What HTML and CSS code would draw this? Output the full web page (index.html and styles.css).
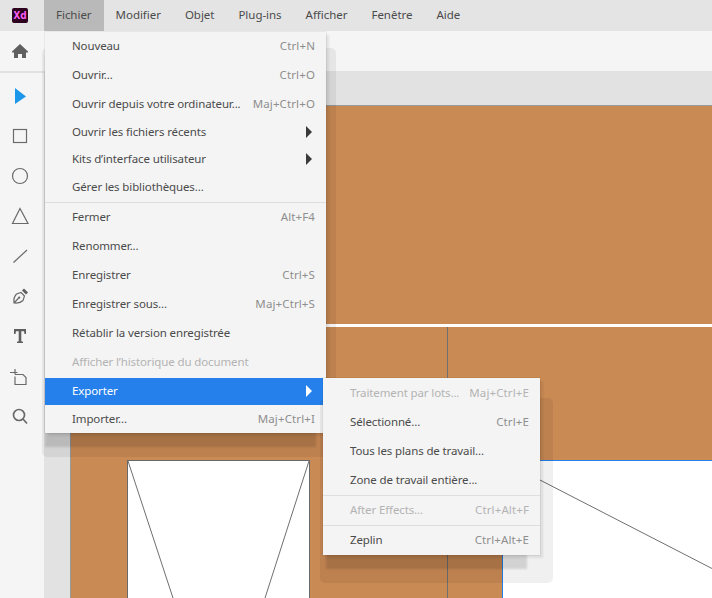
FILE: index.html
```html
<!DOCTYPE html>
<html lang="fr">
<head>
    <meta charset="UTF-8">
    <title>Adobe XD</title>
    <link rel="stylesheet" href="styles.css">
</head>
<body>
<div class="app">
    <div class="titlebar">
        <div class="logo-cell"><span class="logo">Xd</span></div>
        <div class="mainmenu active">Fichier</div>
        <div class="mainmenu">Modifier</div>
        <div class="mainmenu">Objet</div>
        <div class="mainmenu">Plug-ins</div>
        <div class="mainmenu">Afficher</div>
        <div class="mainmenu">Fenêtre</div>
        <div class="mainmenu">Aide</div>
    </div>
    <div class="topbar">
        <div class="tool">
            <svg width="24" height="24" viewBox="0 0 24 24"><path class="fill" d="M12 5 L20 12.5 V13.5 H18 V19 H14 V15 H10 V19 H6 V13.5 H4 V12.5 Z"/></svg>
        </div>
    </div>
    <div class="main">
        <div class="toolbar">
            <div class="tool"><svg width="24" height="24" viewBox="0 0 24 24"><path class="blue" d="M7 4 L18 12.5 L7 20 Z"/></svg></div>
            <div class="tool"><svg width="24" height="24" viewBox="0 0 24 24"><rect class="line" x="5.5" y="5.5" width="13" height="13"/></svg></div>
            <div class="tool"><svg width="24" height="24" viewBox="0 0 24 24"><circle class="line" cx="12" cy="12" r="7.5"/></svg></div>
            <div class="tool"><svg width="24" height="24" viewBox="0 0 24 24"><path class="line" d="M12 4.5 L4.5 19.5 H20 Z"/></svg></div>
            <div class="tool"><svg width="24" height="24" viewBox="0 0 24 24"><path class="line" d="M5.5 18.5 L19 6"/></svg></div>
            <div class="tool"><svg width="24" height="24" viewBox="0 0 24 24"><path class="line" d="M6 19 C5.5 15 6.5 12 8.5 10 L13 8.5 L16.5 12 L15 16.5 C13 18.5 9.5 19.5 6 19 Z M6 19 L10.7 14"/><circle class="fill" cx="11.2" cy="13.6" r="1.1"/><path class="fill" d="M14 6.5 L16 4.5 L20 8.5 L18 10.5 Z"/></svg></div>
            <div class="tool"><svg width="24" height="24" viewBox="0 0 24 24"><path class="fill" d="M6 5 H18 V10 H16.5 L16 7.3 H13.3 V17.3 L15 17.7 V19 H9 V17.7 L10.7 17.3 V7.3 H8 L7.5 10 H6 Z"/></svg></div>
            <div class="tool"><svg width="24" height="24" viewBox="0 0 24 24"><path class="line" d="M7 10.5 H15 L18 13.5 V20.5 H7 V12.5 M2 8.5 H9.5 M7 5 V10.5"/></svg></div>
            <div class="tool"><svg width="24" height="24" viewBox="0 0 24 24"><circle class="line thick" cx="11" cy="11" r="5.5"/><path class="line thick" d="M15 15 L19 19.5"/></svg></div>
        </div>
        <div class="workspace">
            <div class="band"></div>
            <div class="stage">
                <svg class="artboards" width="642" height="493" viewBox="70 105 642 493">
                    <rect x="71" y="324" width="641" height="3" fill="#fff"/>
                    <path class="board-line" d="M447.5 327 V598"/>
                    <rect class="board" x="127.5" y="460.5" width="182" height="140"/>
                    <path class="board-line" d="M128 461 L173 598 M309 461 L265 598"/>
                    <rect class="board-sel" x="502.5" y="460.5" width="212" height="140"/>
                    <path class="board-line" d="M503 461 L712 568.5"/>
                </svg>
            </div>
        </div>
    </div>

    <div class="menu menu-file">
        <div class="menu-body">
            <div class="row"><span>Nouveau</span><span class="key">Ctrl+N</span></div>
            <div class="row"><span>Ouvrir...</span><span class="key">Ctrl+O</span></div>
            <div class="row"><span>Ouvrir depuis votre ordinateur...</span><span class="key">Maj+Ctrl+O</span></div>
            <div class="row short"><span>Ouvrir les fichiers récents</span><i class="arrow"></i></div>
            <div class="row short"><span>Kits d’interface utilisateur</span><i class="arrow"></i></div>
            <div class="row"><span>Gérer les bibliothèques...</span></div>
            <div class="sep"></div>
            <div class="row"><span>Fermer</span><span class="key">Alt+F4</span></div>
            <div class="row"><span>Renommer...</span></div>
            <div class="row"><span>Enregistrer</span><span class="key">Ctrl+S</span></div>
            <div class="row"><span>Enregistrer sous...</span><span class="key">Maj+Ctrl+S</span></div>
            <div class="row"><span>Rétablir la version enregistrée</span></div>
            <div class="row off"><span>Afficher l’historique du document</span></div>
            <div class="row short current"><span>Exporter</span><i class="arrow"></i></div>
            <div class="row last"><span>Importer...</span><span class="key">Maj+Ctrl+I</span></div>
        </div>
    </div>

    <div class="menu menu-export">
        <div class="menu-body">
            <div class="row off"><span>Traitement par lots...</span><span class="key">Maj+Ctrl+E</span></div>
            <div class="row"><span>Sélectionné...</span><span class="key">Ctrl+E</span></div>
            <div class="row"><span>Tous les plans de travail...</span></div>
            <div class="row"><span>Zone de travail entière...</span></div>
            <div class="sep"></div>
            <div class="row off"><span>After Effects...</span><span class="key">Ctrl+Alt+F</span></div>
            <div class="sep"></div>
            <div class="row"><span>Zeplin</span><span class="key">Ctrl+Alt+E</span></div>
        </div>
    </div>
</div>
</body>
</html>
```

FILE: styles.css
```css
*{
 box-sizing: border-box;
}
html, body{
 margin: 0;
 height: 100%;
 overflow: hidden;
}
body{
 font-family: "Noto Sans", "Open Sans", sans-serif;
 font-size: 11.5px;
 letter-spacing: -0.12px;
 color: #4b4b4b;
 background-color: #f5f5f5;
}
.app{
 position: relative;
 width: 712px;
 height: 598px;
 display: flex;
 flex-direction: column;
 overflow: hidden;
}

/* title bar */
.titlebar{
 height: 31px;
 flex: none;
 display: flex;
 align-items: stretch;
 background-color: #e4e4e4;
}
.logo-cell{
 width: 44px;
 display: flex;
 align-items: center;
 padding-left: 12px;
}
.logo{
 width: 16px;
 height: 15px;
 border-radius: 2px;
 background-color: #2e001f;
 color: #ff61f6;
 font-size: 10px;
 font-weight: 700;
 line-height: 15px;
 text-align: center;
}
.mainmenu{
 padding: 0 12px 2px;
 line-height: 29px;
 letter-spacing: -0.03px;
 white-space: nowrap;
}
.mainmenu.active{
 background-color: #b9b9b9;
}

/* home row + tools */
.topbar{
 height: 40px;
 flex: none;
 background-color: #f5f5f5;
}
.main{
 flex: 1;
 display: flex;
 min-height: 0;
}
.toolbar{
 width: 44px;
 flex: none;
 padding-top: 3px;
 border-top: 2px solid #e2e2e2;
 background-color: #f5f5f5;
}
.tool{
 width: 40px;
 height: 40px;
 display: flex;
 align-items: center;
 justify-content: center;
}
.fill{
 fill: #5f5f5f;
}
.blue{
 fill: #1c97ea;
}
.line{
 fill: none;
 stroke: #6a6a6a;
 stroke-width: 1.2;
}
.line.thick{
 stroke-width: 1.7;
}

/* canvas */
.workspace{
 flex: 1;
 display: flex;
 flex-direction: column;
 background-color: #e2e2e2;
}
.band{
 height: 34px;
 flex: none;
}
.stage{
 flex: 1;
 margin-left: 26px;
 background-color: #c98a54;
 box-shadow: inset 1px 1px 0 #9a9a9a;
 overflow: hidden;
}
.artboards{
 display: block;
}
.board{
 fill: #fff;
 stroke: #6a6a6a;
}
.board-sel{
 fill: #fff;
 stroke: #2680eb;
}
.board-line{
 fill: none;
 stroke: #6f6f6f;
}

/* dropdown menus */
.menu{
 position: absolute;
}
.menu::before{
 content: "";
 position: absolute;
 border-radius: 5px;
 background-color: rgba(0,0,0,.06);
}
.menu-file{
 left: 45px;
 top: 32px;
 width: 281px;
}
.menu-file::before{
 left: -3px;
 right: -10px;
 top: 16px;
 bottom: -24px;
}
.menu-export{
 left: 323px;
 top: 378px;
 width: 217px;
}
.menu-export::before{
 left: -3px;
 right: -13px;
 top: 20px;
 bottom: -28px;
}
.menu-body{
 position: relative;
 background-color: #f4f4f4;
}
.menu-file .menu-body{
 box-shadow: 0 0 1px rgba(0,0,0,.3), 3px 3px 2px rgba(0,0,0,.08), -5px 19px 2px -5px rgba(0,0,0,.12);
}
.menu-export .menu-body{
 padding-top: 1px;
 box-shadow: 0 0 1px rgba(0,0,0,.3), 3px 3px 2px rgba(0,0,0,.08), -5px 22px 2px -8px rgba(0,0,0,.12);
}
.row{
 height: 29px;
 display: flex;
 align-items: center;
 justify-content: space-between;
 padding: 0 11px 2px 27px;
 white-space: nowrap;
}
.row.short{
 height: 27px;
}
.row.last{
 height: 28px;
}
.row .key{
 color: #8e8e8e;
 letter-spacing: 0.12px;
}
.row.off, .row.off .key{
 color: #b3b3b3;
}
.row.current{
 margin-top: 1px;
 background-color: #2680eb;
 color: #fff;
}
.sep{
 height: 1px;
 background-color: #dedede;
}
.arrow{
 width: 0;
 height: 0;
 margin-right: 3px;
 border-left: 6px solid #3a3a3a;
 border-top: 6px solid transparent;
 border-bottom: 6px solid transparent;
}
.current .arrow{
 border-left-color: #fff;
}
```
